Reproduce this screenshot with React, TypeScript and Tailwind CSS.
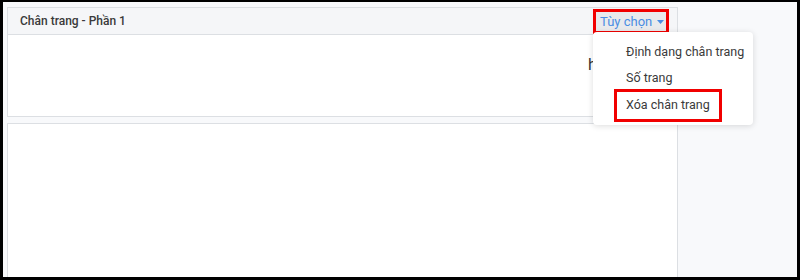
const menuItems = ["Định dạng chân trang", "Số trang"];

function OptionsMenu() {
  return (
    <div className="relative mt-px mr-[8px] self-start">
      <button
        type="button"
        className="flex h-[25px] w-[76px] items-center gap-[5px] border-[3px] border-[#f10000] bg-[#e9eaec] pl-[4px] text-[13px] text-[#4a8de3]"
      >
        Tùy chọn
        <svg width="7" height="4" viewBox="0 0 7 4" className="mt-px">
          <path d="M0 0h7L3.5 4z" fill="#4a8de3" />
        </svg>
      </button>

      {/* Dropdown */}
      <div className="absolute left-0 top-[23px] z-10 w-[160px] rounded-[4px] bg-white pt-[7px] pb-[3px] shadow-[0_1px_6px_rgba(0,0,0,0.14)]">
        {menuItems.map((item) => (
          <div key={item} className="flex h-[26px] items-center pl-[33px] text-[12.5px] text-[#3a3a3a]">
            {item}
          </div>
        ))}
        <div className="-mt-[2px] ml-[21px] flex h-[33px] w-[108px] items-center border-[3px] border-[#f10000] pl-[9px] text-[12.5px] text-[#3a3a3a]">
          Xóa chân trang
        </div>
      </div>
    </div>
  );
}

export default function App() {
  return (
    <div
      className="flex h-[280px] w-[800px] border-t-2 border-r-[3px] border-b-[3px] border-l-[3px] border-black bg-[#f8f9fb]"
      style={{ fontFamily: "Roboto, 'Noto Sans', sans-serif" }}
    >
      <div className="flex w-[675px] flex-col pt-[5px] pl-[4px]">
        {/* Footer section panel */}
        <section className="flex h-[110px] flex-col border border-[#dcdfe3] bg-white">
          <div className="flex h-[27px] items-center justify-between border-b border-[#dcdfe3] bg-[#f5f6f8]">
            <span className="pl-[12px] text-[12px] font-medium text-[#3a3a3a]">Chân trang - Phần 1</span>
            <OptionsMenu />
          </div>
          <div className="relative flex-1">
            <span className="absolute left-[580px] top-[18px] text-[16px] text-[#333]">h</span>
          </div>
        </section>

        {/* Body panel */}
        <section className="mt-[6px] flex-1 border border-b-0 border-[#dcdfe3] bg-white" />
      </div>
      <div className="flex-1" />
    </div>
  );
}
